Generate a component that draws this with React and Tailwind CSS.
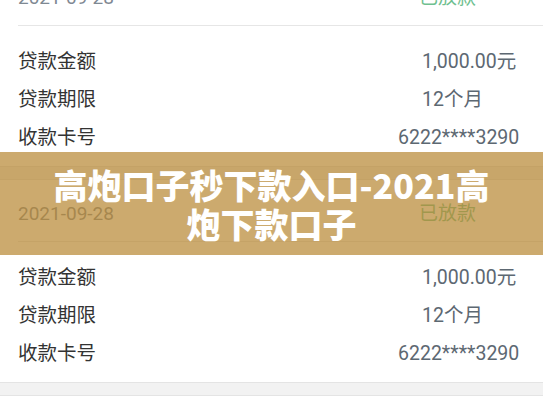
// App.jsx
import React from "react";

const cjk = "font-['Roboto','Noto_Sans_CJK_SC',sans-serif]";

const rows = [
  { label: "贷款金额", value: "1,000.00元", shift: "" },
  { label: "贷款期限", value: "12个月", shift: "" },
  { label: "收款卡号", value: "6222****3290", shift: "-ml-[24px]" },
];

function LoanCard() {
  return (
    <div className="bg-white">
      <div className="h-[61px] pl-[18px] pr-[67px] pb-[15px] flex items-end justify-between text-[19px] leading-[24px]">
        <span className="text-[#7f8993]">2021-09-28</span>
        <span className="text-[#6fc08f]">已放款</span>
      </div>
      <div className="ml-[18px] h-px bg-[#e6e6e6]" />
      <div className="pt-[17px] pb-[9px]">
        {rows.map((r) => (
          <div key={r.label} className="h-[38px] grid grid-cols-[404px_1fr] items-center pl-[18px]">
            <span className="text-[#333333] text-[19.5px]">{r.label}</span>
            <span className={`text-[#5d6872] text-[19.5px] ${r.shift}`}>{r.value}</span>
          </div>
        ))}
      </div>
    </div>
  );
}

function Gap() {
  return <div className="h-[14px] bg-[#f2f2f2] border-y border-[#e4e4e4]" />;
}

export default function App() {
  return (
    <div className={`relative w-[543px] h-[408px] overflow-hidden bg-white ${cjk}`}>
      <div className="-mt-[36px]">
        <LoanCard />
        <Gap />
        <LoanCard />
        <Gap />
      </div>

      <div className="absolute left-0 right-0 top-[152px] h-[103px] bg-[#b78630]/70 flex items-center justify-center">
        <h1 className="text-center text-white font-black text-[34px] leading-[39px] font-['Noto_Sans_CJK_SC',sans-serif]">
          高炮口子秒下款入口-2021高
          <br />
          炮下款口子
        </h1>
      </div>
    </div>
  );
}
